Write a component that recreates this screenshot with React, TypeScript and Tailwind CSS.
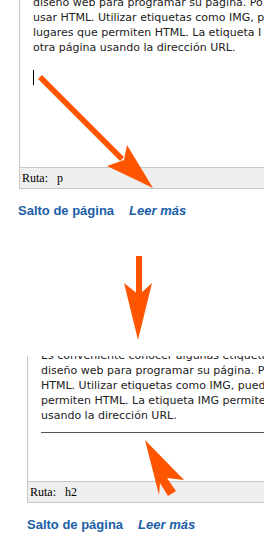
const bodyFont = { fontFamily: '"DejaVu Sans", Verdana, sans-serif' };

function StatusBar({ node }: { node: string }) {
  return (
    <div className="h-[22px] border-t border-b border-[#c8c8c8] bg-[#efefef] flex items-center pl-[2px] text-[12px] text-black font-['Liberation_Serif',serif]">
      <span className="w-[35px]">Ruta:</span>
      <span>{node}</span>
    </div>
  );
}

function Links({ left }: { left: string }) {
  return (
    <div className={`flex gap-[15px] text-[13px] font-bold leading-[15px] text-[#1b5ea6] font-['Liberation_Sans',Arial,sans-serif] ${left}`}>
      <span>Salto de página</span>
      <span className="italic">Leer más</span>
    </div>
  );
}

export default function App() {
  return (
    <div className="relative w-[264px] h-[550px] overflow-hidden bg-white">
      {/* primera captura */}
      <div className="ml-[19px] border-l border-[#c8c8c8]">
        <div className="h-[167px] overflow-hidden pl-[13px] text-[11px] leading-[15px] text-[#222] whitespace-nowrap" style={bodyFont}>
          <div className="-mt-[5px]">
            <div>diseño web para programar su página. Po</div>
            <div>usar HTML. Utilizar etiquetas como IMG, p</div>
            <div>lugares que permiten HTML. La etiqueta I</div>
            <div>otra página usando la dirección URL.</div>
            <div className="h-[15px]" />
            <div className="w-px h-[15px] bg-black" />
          </div>
        </div>
        <StatusBar node="p" />
      </div>
      <Links left="ml-[18px] mt-[14px]" />

      <div className="h-[138px]" />

      {/* segunda captura */}
      <div className="ml-[27px] border-l border-[#c8c8c8]">
        <div className="h-[125px] overflow-hidden pl-[13px] text-[11px] leading-[15px] text-[#222] whitespace-nowrap" style={bodyFont}>
          <div className="-mt-[8px]">
            <div>Es conveniente conocer algunas etiquetas</div>
            <div>diseño web para programar su página. P</div>
            <div>HTML. Utilizar etiquetas como IMG, pued</div>
            <div>permiten HTML. La etiqueta IMG permite</div>
            <div>usando la dirección URL.</div>
          </div>
          <div className="mt-[9px] h-px bg-[#555]" />
        </div>
        <StatusBar node="h2" />
      </div>
      <Links left="ml-[27px] mt-[14px]" />

      {/* flechas */}
      <svg className="absolute left-0 top-0" width="264" height="550" viewBox="0 0 264 550">
        <line x1="40" y1="77" x2="122" y2="159" stroke="#ff5500" strokeWidth="5.5" />
        <polygon points="153,188 107,166 124,160 127,145" fill="#ff5500" />
        <rect x="136" y="256" width="6" height="40" fill="#ff5500" />
        <polygon points="124,283 139,295 152,283 138,340" fill="#ff5500" />
        <polygon points="145,440 184,480 167,478 176,491 168,496 160,483 159,495" fill="#ff5500" />
      </svg>
    </div>
  );
}
